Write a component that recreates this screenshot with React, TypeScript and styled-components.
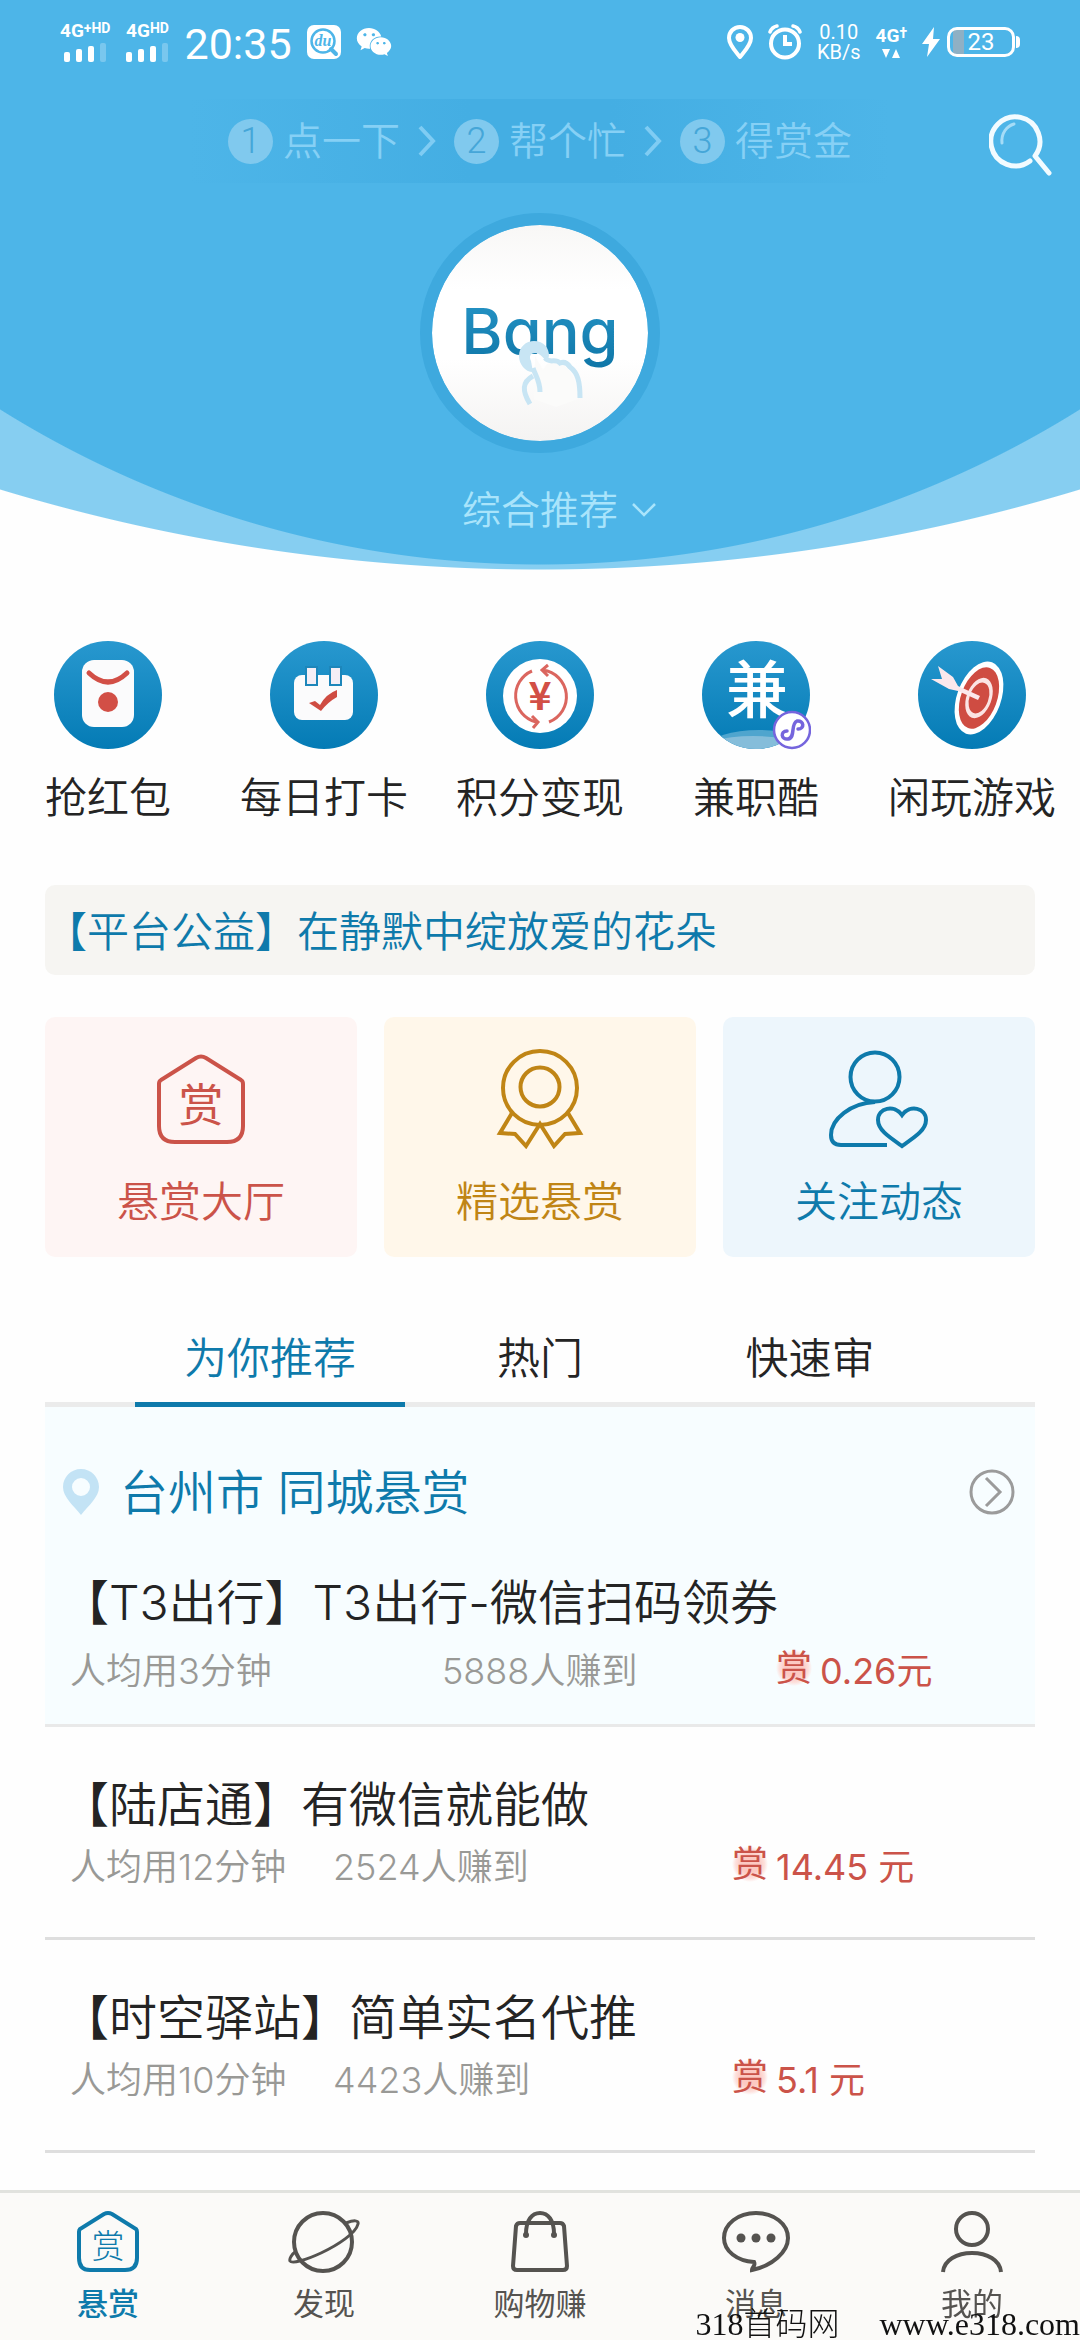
import React from 'react';
import styled, { createGlobalStyle } from 'styled-components';
import { FaWeixin } from 'react-icons/fa';

const color = {
  sky: '#4db5e8',
  skyLight: '#86cef1',
  skyDeep: '#3ea9de',
  blue: '#0e7aab',
  red: '#cb5349',
  gold: '#c08515',
  ink: '#242424',
  grey: '#999996',
  navInk: '#555350',
  rule: '#dedede',
};

const GlobalStyle = createGlobalStyle`
  *, *::before, *::after { box-sizing: border-box; }
  body {
    margin: 0;
    background: #fefefe;
    color: ${color.ink};
    font-family: Inter, "Noto Sans CJK SC", sans-serif;
    font-weight: 350;
  }
  button { margin: 0; padding: 0; border: 0; background: none; color: inherit; font: inherit; cursor: pointer; }
  a { color: inherit; text-decoration: none; }
  h1, h2, h3, p, ul { margin: 0; padding: 0; font-weight: inherit; }
  ul { list-style: none; }
  svg { display: block; flex: none; }
`;

const Page = styled.div`
  display: flex;
  flex-direction: column;
  min-height: 100vh;
`;

/* ---------- header ---------- */

const Header = styled.header`
  display: flex;
  flex-direction: column;
  height: 570px;
  background:
    radial-gradient(circle at 50% -453px, ${color.sky} 1017px, transparent 1018px),
    radial-gradient(circle at 50% -1292px, ${color.skyLight} 1861px, transparent 1862px);
`;

const StatusBar = styled.div`
  display: flex;
  align-items: center;
  justify-content: space-between;
  height: 84px;
  padding: 0 60px;
  color: #fff;
  font-family: Roboto, "Noto Sans CJK SC", sans-serif;
  font-weight: 400;
`;

const StatusGroup = styled.div<{ $gap: number }>`
  display: flex;
  align-items: center;
  gap: ${(p) => p.$gap}px;
`;

const Signal = styled.div`
  display: flex;
  flex-direction: column;
  align-items: center;
  gap: 2px;
  height: 40px;
`;

const SignalLabel = styled.div`
  display: flex;
  align-items: flex-start;
  font-size: 19px;
  font-weight: 700;
  line-height: 18px;
`;

const SignalMark = styled.span`
  font-size: 14px;
  line-height: 12px;
`;

const Clock = styled.time`
  font-size: 43px;
  line-height: 44px;
  padding-top: 4px;
`;

const Speed = styled.div`
  display: flex;
  flex-direction: column;
  align-items: center;
  font-size: 20px;
  line-height: 20px;
`;

const DataLink = styled.div`
  display: flex;
  flex-direction: column;
  align-items: center;
  gap: 4px;
`;

const Battery = styled.div`
  display: flex;
  align-items: center;
  gap: 1px;
  &::after {
    content: '';
    width: 4px;
    height: 12px;
    border-radius: 0 4px 4px 0;
    background: #fff;
  }
`;

const BatteryBody = styled.div`
  display: flex;
  align-items: center;
  justify-content: center;
  width: 68px;
  height: 30px;
  border: 3px solid #fff;
  border-radius: 10px;
  background: linear-gradient(to right, transparent 3px, #8fb0c4 3px, #8fb0c4 14px, transparent 14px);
  font-size: 24px;
  line-height: 24px;
`;

const TopRow = styled.div`
  display: grid;
  grid-template-columns: 1fr auto 1fr;
  align-items: center;
  margin-top: 15px;
`;

const Steps = styled.ol`
  display: flex;
  grid-column: 2;
  align-items: center;
  gap: 18px;
  height: 84px;
  margin: 0;
  padding: 0 38px;
  list-style: none;
  background: linear-gradient(to right, transparent, #44aee3 40%, #44aee3 60%, transparent);
`;

const Step = styled.li`
  display: flex;
  align-items: center;
  gap: 10px;
  color: #86d0f5;
  font-size: 39px;
  line-height: 48px;
`;

const StepNumber = styled.span`
  display: flex;
  align-items: center;
  justify-content: center;
  width: 45px;
  height: 45px;
  border-radius: 50%;
  background: #80c9ee;
  color: #45a6d8;
  font-family: Roboto, sans-serif;
  font-size: 36px;
`;

const SearchButton = styled.button`
  justify-self: end;
  margin-right: 27px;
  padding-top: 6px;
`;

const Logo = styled.button`
  display: flex;
  align-items: center;
  justify-content: center;
  align-self: center;
  position: relative;
  width: 240px;
  height: 240px;
  margin-top: 30px;
  border: 12px solid ${color.skyDeep};
  border-radius: 50%;
  background: linear-gradient(#f8f7f6, #fff 30%, #fff 62%, #f4f3f2);
  background-clip: padding-box;
`;

const LogoText = styled.span`
  padding-bottom: 4px;
  background: linear-gradient(#2796c8, #0d74a5);
  background-clip: text;
  color: transparent;
  font-family: Inter, sans-serif;
  font-feature-settings: 'cv11' 1;
  font-size: 63px;
  font-weight: 500;
  line-height: 76px;
`;

const TapHand = styled.svg`
  position: absolute;
  left: 84px;
  top: 114px;
`;

const Channel = styled.button`
  display: flex;
  align-items: center;
  align-self: center;
  gap: 14px;
  margin-top: 33px;
  padding-left: 38px;
  color: #a9e4fb;
  font-size: 39px;
  line-height: 48px;
`;

/* ---------- shortcuts ---------- */

const Shortcuts = styled.nav`
  display: grid;
  grid-template-columns: repeat(5, 1fr);
  margin-top: 70px;
`;

const Shortcut = styled.a`
  display: flex;
  flex-direction: column;
  align-items: center;
  gap: 20px;
  font-size: 42px;
  line-height: 56px;
  white-space: nowrap;
`;

const Body = styled.main`
  display: flex;
  flex-direction: column;
  padding: 0 45px;
`;

const Notice = styled.a`
  margin-top: 59px;
  padding-top: 3px;
  border-radius: 10px;
  background: #f6f5f2;
  color: ${color.blue};
  font-size: 42px;
  line-height: 87px;
`;

const Cards = styled.div`
  display: grid;
  grid-template-columns: repeat(3, 1fr);
  gap: 27px;
  margin-top: 42px;
`;

const Card = styled.a<{ $tint: string; $ink: string }>`
  display: flex;
  flex-direction: column;
  align-items: center;
  gap: 25px;
  height: 240px;
  padding-top: 32px;
  border-radius: 10px;
  background: ${(p) => p.$tint};
  color: ${(p) => p.$ink};
  font-size: 42px;
  line-height: 56px;
`;

/* ---------- tabs and list ---------- */

const Tabs = styled.div`
  display: grid;
  grid-template-columns: repeat(3, 1fr);
  margin-top: 54px;
  padding: 0 9.0909%;
  background: linear-gradient(#ebebeb, #ebebeb) bottom / 100% 5px no-repeat;
`;

const Tab = styled.button<{ $active?: boolean }>`
  height: 96px;
  padding-top: 4px;
  border-bottom: 5px solid ${(p) => (p.$active ? color.blue : 'transparent')};
  color: ${(p) => (p.$active ? color.blue : color.ink)};
  font-size: 43px;
  line-height: 87px;
`;

const Local = styled.section`
  background: #f7fdff;
  border-bottom: 3px solid #e9e9e9;
`;

const LocalHead = styled.a`
  display: flex;
  align-items: center;
  gap: 21px;
  padding: 51px 20px 0 18px;
  color: ${color.blue};
`;

const LocalName = styled.h2`
  flex: 1;
  padding-top: 3px;
  font-size: 48px;
  line-height: 64px;
`;

const Task = styled.a<{ $local?: boolean }>`
  display: block;
  padding: ${(p) => (p.$local ? '46px 26px 27px 16px' : '46px 26px 44px 16px')};
`;

const TaskTitle = styled.h3`
  font-size: 48px;
  line-height: 64px;
`;

const TaskMeta = styled.div<{ $local?: boolean }>`
  display: grid;
  grid-template-columns: ${(p) => (p.$local ? '372fr 334fr 233fr' : '263fr 399fr 277fr')};
  align-items: center;
  margin-top: ${(p) => (p.$local ? 10 : 4)}px;
  padding-left: 9px;
  color: ${color.grey};
  font-size: 36px;
  line-height: 52px;
`;

const Reward = styled.strong`
  display: flex;
  align-items: center;
  gap: 8px;
  color: ${color.red};
  font-weight: 400;
  white-space: nowrap;
`;

const Badge = styled.span`
  width: 36px;
  height: 40px;
  margin-top: -6px;
  background: radial-gradient(circle closest-side, #fcc9c2 50%, #fde0dc 80%, transparent);
  text-align: center;
  line-height: 40px;
`;

const TaskItem = styled.li`
  border-bottom: 3px solid ${color.rule};
`;

/* ---------- bottom bar ---------- */

const BottomBar = styled.nav`
  position: sticky;
  bottom: 0;
  display: grid;
  grid-template-columns: repeat(5, 1fr);
  height: 150px;
  margin-top: auto;
  border-top: 3px solid #e1e2de;
  background: #fbfaf8;
`;

const BottomItem = styled.a<{ $active?: boolean }>`
  display: flex;
  flex-direction: column;
  align-items: center;
  gap: 10px;
  padding-top: 17px;
  color: ${(p) => (p.$active ? color.blue : color.navInk)};
  font-size: 31px;
  font-weight: ${(p) => (p.$active ? 500 : 400)};
  line-height: 40px;
`;

const SiteMark = styled.div`
  position: absolute;
  right: 0;
  bottom: 0;
  display: flex;
  align-items: center;
  gap: 40px;
  color: #111;
  font-family: "Liberation Serif", "Noto Sans CJK SC", serif;
  font-size: 32px;
  font-weight: 300;
  line-height: 32px;
  white-space: nowrap;
`;

/* ---------- drawings ---------- */

const SignalBars = () => (
  <svg width="44" height="20" viewBox="0 0 44 20" fill="#fff">
    <rect x="1" y="10" width="6" height="10" rx="2" />
    <rect x="13" y="7" width="6" height="13" rx="2" />
    <rect x="25" y="4" width="6" height="16" rx="2" />
    <rect x="37" y="1" width="6" height="19" rx="2" opacity="0.25" />
  </svg>
);

const SearchAppIcon = () => (
  <svg width="34" height="34" viewBox="0 0 34 34">
    <rect width="34" height="34" rx="7" fill="#fff" />
    <circle cx="16" cy="16" r="11.5" fill="none" stroke={color.sky} strokeWidth="2.5" />
    <path d="M24 24 L29 29" stroke={color.sky} strokeWidth="4" strokeLinecap="round" />
    <text x="16" y="21" textAnchor="middle" fontFamily="Liberation Serif, serif" fontStyle="italic" fontWeight="700" fontSize="16" fill={color.sky}>du</text>
  </svg>
);

const PinIcon = () => (
  <svg width="26" height="34" viewBox="0 0 26 34">
    <path d="M13 2 C6.5 2 2 7 2 13 C2 20 9 27 13 32 C17 27 24 20 24 13 C24 7 19.5 2 13 2 Z" fill="none" stroke="#fff" strokeWidth="4" strokeLinejoin="round" />
    <circle cx="13" cy="12.5" r="4.5" fill="#fff" />
  </svg>
);

const AlarmIcon = () => (
  <svg width="34" height="36" viewBox="0 0 34 36" fill="none" stroke="#fff">
    <circle cx="17" cy="19.5" r="14" strokeWidth="4" />
    <path d="M17 11 V20 H24" strokeWidth="4" />
    <path d="M2 8 Q4 3 9 2 M32 8 Q30 3 25 2" strokeWidth="3.5" strokeLinecap="round" />
  </svg>
);

const Chevron = () => (
  <svg width="18" height="32" viewBox="0 0 18 32" fill="none" stroke="#7fccf3" strokeWidth="4">
    <path d="M2 2 L15 16 L2 30" />
  </svg>
);

const SearchIcon = () => (
  <svg width="64" height="64" viewBox="0 0 64 64" fill="none" stroke="#f2fbff" strokeLinecap="round">
    <path d="M41 49 A24.5 24.5 0 1 1 46 44 L60 61" strokeWidth="5" strokeLinejoin="round" />
    <path d="M13 31 C12 21 18 14 25 12" stroke="#a5dcf7" strokeWidth="3" />
  </svg>
);

const HandDrawing = () => (
  <TapHand width="72" height="70" viewBox="0 0 72 70" aria-hidden="true">
    <path d="M17 33 C9 33 3 25 3 17 C3 8 10 2 18 2 C28 2 33 9 33 17 L31 22 C27 20 25 14 19 14 C14 14 13 18 15 22 Z" fill="#c8e5f4" />
    <path d="M19 17 L27 31 L31 25 C45 20 60 30 62 60 L40 68 L18 60 Z" fill="#fbfbfa" />
    <path d="M14 65 C6 52 6 43 17 37 M17 29 C20 38 24 42 24 53 M29 19 C34 25 39 19 44 24 C49 22 52 25 54 28 C62 34 64 43 64 59" fill="none" stroke="#c8e5f4" strokeWidth="5" />
  </TapHand>
);

const Disc = ({ id, width = 108, children }: { id: string; width?: number; children: React.ReactNode }) => (
  <svg width={width} height="110" viewBox={`0 0 ${width} 110`}>
    <defs>
      <linearGradient id={id} x1="0" y1="0" x2="0" y2="1">
        <stop offset="0" stopColor="#2898cf" />
        <stop offset="1" stopColor="#047bb5" />
      </linearGradient>
    </defs>
    <circle cx={width / 2} cy="55" r="54" fill={`url(#${id})`} />
    {children}
  </svg>
);

const EnvelopeIcon = () => (
  <Disc id="d1">
    <rect x="28" y="20" width="52" height="67" rx="12" fill="#fbfbfc" />
    <path d="M35 33 Q54 51 73 33" fill="none" stroke="#d24f46" strokeWidth="5" strokeLinecap="round" />
    <circle cx="54" cy="62" r="10" fill="#d24f46" />
  </Disc>
);

const CalendarIcon = () => (
  <Disc id="d2">
    <rect x="24" y="35" width="59" height="45" rx="8" fill="#fbfbfc" />
    <rect x="36" y="27" width="11" height="18" fill="#f4eef6" stroke="#1d86ba" strokeWidth="2" />
    <rect x="60" y="27" width="11" height="18" fill="#f4eef6" stroke="#1d86ba" strokeWidth="2" />
    <path d="M39 63 L45 61 L50 65 Q56 54 67 50 V57 Q58 62 51 71 Z" fill="#cf4c42" />
  </Disc>
);

const CoinIcon = () => (
  <Disc id="d3">
    <circle cx="54" cy="56" r="37" fill="#fff" />
    <g fill="none" stroke="#db665f" strokeWidth="3">
      <path d="M46 31 A27 27 0 0 0 50 82 M46 76 L52 82 L47 88" />
      <path d="M63 82 A27 27 0 0 0 57 30 M62 25 L56 30 L62 36" />
    </g>
    <text x="54" y="70" textAnchor="middle" fontFamily="Noto Sans CJK SC, sans-serif" fontWeight="700" fontSize="39" fill="#d24f46">¥</text>
  </Disc>
);

const JobIcon = () => (
  <Disc id="d4" width={110}>
    <clipPath id="d4clip"><circle cx="55" cy="55" r="54" /></clipPath>
    <g clipPath="url(#d4clip)">
      <ellipse cx="58" cy="106" rx="50" ry="16" fill="#4fa5ce" />
      <ellipse cx="52" cy="112" rx="56" ry="16" fill="#85bdda" />
    </g>
    <text x="56" y="73" textAnchor="middle" fontFamily="Noto Sans CJK SC, sans-serif" fontWeight="500" fontSize="62" fill="#fff">兼</text>
    <circle cx="91" cy="90" r="18" fill="#fff" stroke="#7565dd" strokeWidth="2.5" />
    <path d="M86 91 C79 91 80 100 87 99 C95 98 89 84 96 81 C103 80 104 89 97 89" fill="none" stroke="#7565dd" strokeWidth="3.5" strokeLinecap="round" />
  </Disc>
);

const TargetIcon = () => (
  <Disc id="d5">
    <g transform="rotate(20 61 58)">
      <ellipse cx="61" cy="58" rx="22" ry="38" fill="#fff" />
      <ellipse cx="61" cy="58" rx="18" ry="32" fill="#cf4c42" />
      <ellipse cx="61" cy="58" rx="12.5" ry="21" fill="#fbe4e4" />
      <ellipse cx="61" cy="58" rx="9.5" ry="16" fill="#cf4c42" />
    </g>
    <path d="M13 39 L24 39 L20 26 L35 37 L40 46 L62 56 L60 60 L40 51 L31 49 Z" fill="#fbe8ec" />
  </Disc>
);

const HouseIcon = () => (
  <svg width="100" height="100" viewBox="0 0 100 100" fill="none" stroke="currentColor" strokeWidth="4">
    <path d="M45 9 Q50 6 55 9 L90 31 Q92 32 92 35 V77 Q92 93 76 93 H24 Q8 93 8 77 V35 Q8 32 10 31 Z" />
    <text x="50" y="73" textAnchor="middle" fontFamily="Noto Sans CJK SC, sans-serif" fontWeight="400" fontSize="45" fill="currentColor" stroke="none">赏</text>
  </svg>
);

const MedalIcon = () => (
  <svg width="100" height="100" viewBox="0 0 100 100" fill="none" stroke="currentColor" strokeWidth="4">
    <circle cx="50" cy="39" r="37" />
    <circle cx="50" cy="38" r="19.5" />
    <path d="M22 64 L10 84 L25 85 L36 97 L50 75 L64 97 L75 85 L90 84 L78 64" />
  </svg>
);

const FollowIcon = () => (
  <svg width="100" height="100" viewBox="0 0 100 100" fill="none" stroke="currentColor" strokeWidth="4">
    <circle cx="46" cy="28" r="24.5" />
    <path d="M46 53 C22 54 2 70 2 86 Q2 96 12 96 H58" />
    <path d="M73 97 C60 88 49 81 49 71 C49 59 65 55 73 66 C81 55 97 59 97 71 C97 81 86 88 73 97 Z" />
  </svg>
);

const PlaceIcon = () => (
  <svg width="36" height="46" viewBox="0 0 36 46">
    <path fillRule="evenodd" d="M18 0 C8 0 0 8 0 18 C0 28 10 36 18 46 C26 36 36 28 36 18 C36 8 28 0 18 0 Z M18 9 A9 9 0 1 1 18 27 A9 9 0 1 1 18 9 Z" fill="#c3e3f5" />
  </svg>
);

const MoreIcon = () => (
  <svg width="46" height="46" viewBox="0 0 46 46" fill="none" stroke="#9b9b9b" strokeWidth="3">
    <circle cx="23" cy="23" r="21" />
    <path d="M17 9 L31 23 L17 37" />
  </svg>
);

const NavIcon = ({ children }: { children: React.ReactNode }) => (
  <svg width="72" height="64" viewBox="0 0 72 64" fill="none" stroke="currentColor" strokeWidth="4">{children}</svg>
);

const navItems = [
  {
    label: '悬赏',
    active: true,
    icon: (
      <NavIcon>
        <path d="M32 4 Q36 2 40 4 L64 19 Q65 20 65 22 V48 Q65 60 53 60 H18 Q7 60 7 48 V22 Q7 20 8 19 Z" />
        <text x="36" y="48" textAnchor="middle" fontFamily="Noto Sans CJK SC, sans-serif" fontWeight="300" fontSize="33" fill="currentColor" stroke="none">赏</text>
      </NavIcon>
    ),
  },
  {
    label: '发现',
    icon: (
      <NavIcon>
        <circle cx="35" cy="32" r="29" />
        <path d="M58 13 C66 10 71 10 70 14 C68 23 50 35 33 43 C18 50 4 54 2 51 C1 49 4 44 7 42" strokeWidth="3" />
      </NavIcon>
    ),
  },
  {
    label: '购物赚',
    icon: (
      <NavIcon>
        <path d="M16 13 H56 Q59 13 60 16 L63 56 Q63 60 59 60 H13 Q9 60 9 56 L12 16 Q13 13 16 13 Z" />
        <path d="M22 24 C22 10 28 3 36 3 S50 10 50 24" />
        <circle cx="22" cy="25" r="3" fill="currentColor" stroke="none" />
        <circle cx="50" cy="25" r="3" fill="currentColor" stroke="none" />
      </NavIcon>
    ),
  },
  {
    label: '消息',
    icon: (
      <NavIcon>
        <path d="M34 52 C17 51 4 41 4 28 C4 14 18 3 36 3 S68 14 68 28 C68 42 52 56 32 60 C32 57 36 56 34 52 Z" />
        <g fill="currentColor" stroke="none">
          <circle cx="21" cy="28" r="4.5" />
          <circle cx="36" cy="28" r="4.5" />
          <circle cx="51" cy="28" r="4.5" />
        </g>
      </NavIcon>
    ),
  },
  {
    label: '我的',
    icon: (
      <NavIcon>
        <circle cx="36" cy="19" r="16" />
        <path d="M7 62 C8 50 21 43 36 43 S64 50 65 62" />
      </NavIcon>
    ),
  },
];

const shortcuts = [
  { label: '抢红包', icon: <EnvelopeIcon /> },
  { label: '每日打卡', icon: <CalendarIcon /> },
  { label: '积分变现', icon: <CoinIcon /> },
  { label: '兼职酷', icon: <JobIcon /> },
  { label: '闲玩游戏', icon: <TargetIcon /> },
];

const cards = [
  { label: '悬赏大厅', tint: '#fef5f4', ink: color.red, icon: <HouseIcon /> },
  { label: '精选悬赏', tint: '#fff7ea', ink: color.gold, icon: <MedalIcon /> },
  { label: '关注动态', tint: '#edf6fc', ink: color.blue, icon: <FollowIcon /> },
];

const steps = ['点一下', '帮个忙', '得赏金'];
const tabs = ['为你推荐', '热门', '快速审'];

type TaskData = { title: string; time: string; earned: string; price: string };

const localTask: TaskData = { title: '【T3出行】T3出行-微信扫码领券', time: '人均用3分钟', earned: '5888人赚到', price: '0.26元' };
const tasks: TaskData[] = [
  { title: '【陆店通】有微信就能做', time: '人均用12分钟', earned: '2524人赚到', price: '14.45 元' },
  { title: '【时空驿站】简单实名代推', time: '人均用10分钟', earned: '4423人赚到', price: '5.1 元' },
];

const TaskRow = ({ task, local }: { task: TaskData; local?: boolean }) => (
  <Task href="#task" $local={local}>
    <TaskTitle>{task.title}</TaskTitle>
    <TaskMeta $local={local}>
      <span>{task.time}</span>
      <span>{task.earned}</span>
      <Reward>
        <Badge>赏</Badge>
        {task.price}
      </Reward>
    </TaskMeta>
  </Task>
);

export default function App() {
  return (
    <>
      <GlobalStyle />
      <Page>
        <Header>
          <StatusBar>
            <StatusGroup $gap={15}>
              <Signal>
                <SignalLabel>4G<SignalMark>+HD</SignalMark></SignalLabel>
                <SignalBars />
              </Signal>
              <Signal>
                <SignalLabel>4G<SignalMark>HD</SignalMark></SignalLabel>
                <SignalBars />
              </Signal>
              <Clock>20:35</Clock>
              <SearchAppIcon />
              <FaWeixin size={36} />
            </StatusGroup>
            <StatusGroup $gap={15}>
              <PinIcon />
              <AlarmIcon />
              <Speed>
                <span>0.10</span>
                <span>KB/s</span>
              </Speed>
              <DataLink>
                <SignalLabel>4G<SignalMark>†</SignalMark></SignalLabel>
                <svg width="18" height="9" viewBox="0 0 18 9" fill="#fff">
                  <path d="M0 0 H8 L4 9 Z M10 9 H18 L14 0 Z" />
                </svg>
              </DataLink>
              <StatusGroup $gap={7}>
                <svg width="18" height="30" viewBox="0 0 18 30" fill="#fff">
                  <path d="M12 0 L0 17 H7 L5 30 L18 12 H11 Z" />
                </svg>
                <Battery>
                  <BatteryBody>23</BatteryBody>
                </Battery>
              </StatusGroup>
            </StatusGroup>
          </StatusBar>
          <TopRow>
            <Steps>
              {steps.map((label, i) => (
                <React.Fragment key={label}>
                  {i > 0 && <Chevron />}
                  <Step>
                    <StepNumber>{i + 1}</StepNumber>
                    {label}
                  </Step>
                </React.Fragment>
              ))}
            </Steps>
            <SearchButton aria-label="搜索">
              <SearchIcon />
            </SearchButton>
          </TopRow>
          <Logo>
            <LogoText>Bang</LogoText>
            <HandDrawing />
          </Logo>
          <Channel>
            综合推荐
            <svg width="24" height="14" viewBox="0 0 24 14" fill="none" stroke="currentColor" strokeWidth="2.5">
              <path d="M1 1 L12 12 L23 1" />
            </svg>
          </Channel>
        </Header>

        <Shortcuts>
          {shortcuts.map((s) => (
            <Shortcut key={s.label} href="#shortcut">
              {s.icon}
              {s.label}
            </Shortcut>
          ))}
        </Shortcuts>

        <Body>
          <Notice href="#notice">【平台公益】在静默中绽放爱的花朵</Notice>
          <Cards>
            {cards.map((c) => (
              <Card key={c.label} href="#card" $tint={c.tint} $ink={c.ink}>
                {c.icon}
                {c.label}
              </Card>
            ))}
          </Cards>
          <Tabs role="tablist">
            {tabs.map((t, i) => (
              <Tab key={t} role="tab" aria-selected={i === 0} $active={i === 0}>{t}</Tab>
            ))}
          </Tabs>
          <Local>
            <LocalHead href="#local">
              <PlaceIcon />
              <LocalName>台州市 同城悬赏</LocalName>
              <MoreIcon />
            </LocalHead>
            <TaskRow task={localTask} local />
          </Local>
          <ul>
            {tasks.map((t) => (
              <TaskItem key={t.title}>
                <TaskRow task={t} />
              </TaskItem>
            ))}
          </ul>
        </Body>

        <BottomBar>
          {navItems.map((n) => (
            <BottomItem key={n.label} href="#tab" $active={n.active}>
              {n.icon}
              {n.label}
            </BottomItem>
          ))}
          <SiteMark>
            <span>318首码网</span>
            <span>www.e318.com</span>
          </SiteMark>
        </BottomBar>
      </Page>
    </>
  );
}
